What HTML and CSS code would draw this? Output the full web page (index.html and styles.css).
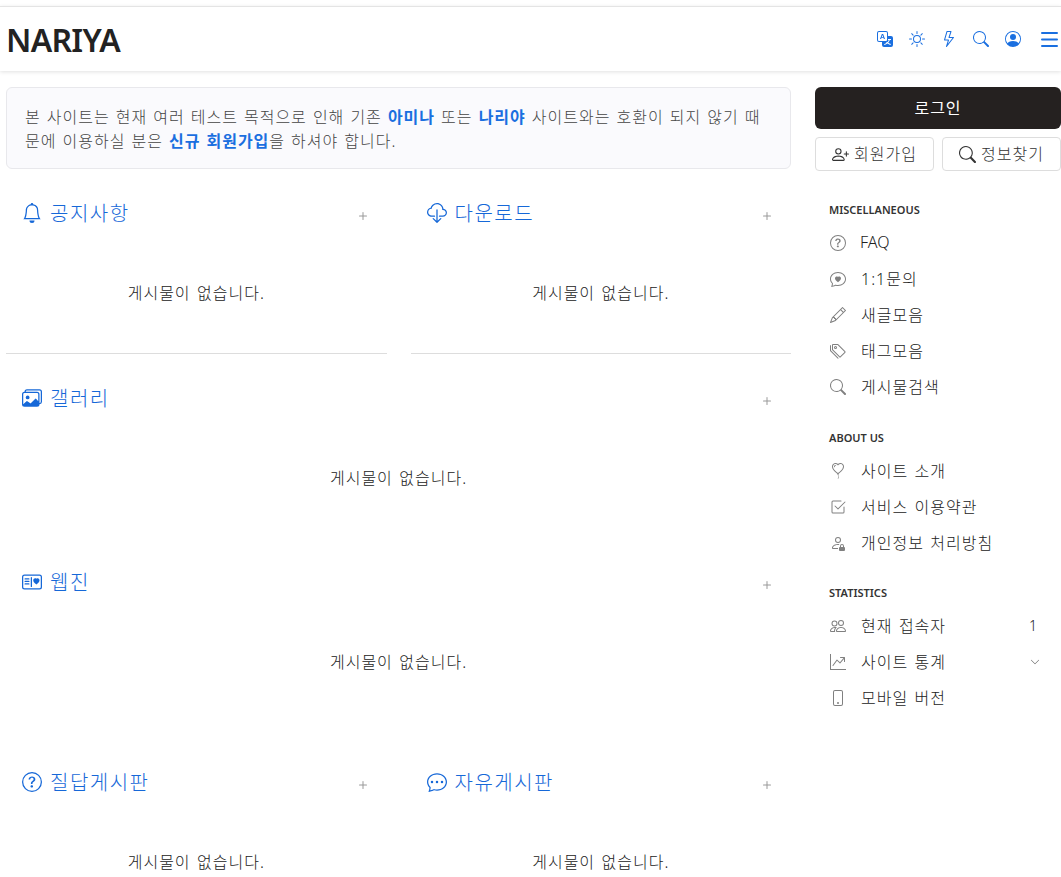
FILE: index.html
```html
<!DOCTYPE html>
<html lang="ko">
  <head>
    <meta charset="UTF-8" />
    <meta name="viewport" content="width=device-width, initial-scale=1" />
    <title>NARIYA</title>
    <link rel="stylesheet" href="styles.css">
  </head>
  <body>
    <!-- Icon sprite -->
    <svg class="sprite" xmlns="http://www.w3.org/2000/svg">
      <symbol id="i-translate" viewBox="0 0 16 16"><path d="M4.545 6.714 4.11 8H3l1.862-5h1.284L8 8H6.833l-.435-1.286H4.545zm1.634-.736L5.5 3.956h-.049l-.679 2.022H6.18z"/><path d="M0 2a2 2 0 0 1 2-2h7a2 2 0 0 1 2 2v3h3a2 2 0 0 1 2 2v7a2 2 0 0 1-2 2H7a2 2 0 0 1-2-2v-3H2a2 2 0 0 1-2-2V2zm2-1a1 1 0 0 0-1 1v7a1 1 0 0 0 1 1h7a1 1 0 0 0 1-1V2a1 1 0 0 0-1-1H2zm7.138 9.995c.193.301.402.583.63.846-.748.575-1.673 1.001-2.768 1.292.178.217.451.635.555.867 1.125-.359 2.08-.844 2.886-1.494.777.665 1.739 1.165 2.93 1.472.133-.254.414-.673.629-.89-1.125-.253-2.057-.694-2.82-1.284.681-.747 1.222-1.651 1.621-2.757H14V8h-3v1.047h.765c-.318.844-.74 1.546-1.272 2.13a6.066 6.066 0 0 1-.415-.492 1.988 1.988 0 0 1-.94.31z"/></symbol>
      <symbol id="i-sun" viewBox="0 0 16 16"><path d="M8 11a3 3 0 1 1 0-6 3 3 0 0 1 0 6zm0 1a4 4 0 1 0 0-8 4 4 0 0 0 0 8zM8 0a.5.5 0 0 1 .5.5v2a.5.5 0 0 1-1 0v-2A.5.5 0 0 1 8 0zm0 13a.5.5 0 0 1 .5.5v2a.5.5 0 0 1-1 0v-2A.5.5 0 0 1 8 13zm8-5a.5.5 0 0 1-.5.5h-2a.5.5 0 0 1 0-1h2a.5.5 0 0 1 .5.5zM3 8a.5.5 0 0 1-.5.5h-2a.5.5 0 0 1 0-1h2A.5.5 0 0 1 3 8zm10.657-5.657a.5.5 0 0 1 0 .707l-1.414 1.415a.5.5 0 1 1-.707-.708l1.414-1.414a.5.5 0 0 1 .707 0zm-9.193 9.193a.5.5 0 0 1 0 .707L3.05 13.657a.5.5 0 0 1-.707-.707l1.414-1.414a.5.5 0 0 1 .707 0zm9.193 2.121a.5.5 0 0 1-.707 0l-1.414-1.414a.5.5 0 0 1 .707-.707l1.414 1.414a.5.5 0 0 1 0 .707zM4.464 4.465a.5.5 0 0 1-.707 0L2.343 3.05a.5.5 0 1 1 .707-.707l1.414 1.414a.5.5 0 0 1 0 .708z"/></symbol>
      <symbol id="i-lightning" viewBox="0 0 16 16"><path d="M5.52.359A.5.5 0 0 1 6 0h4a.5.5 0 0 1 .474.658L8.694 6H12.5a.5.5 0 0 1 .395.807l-7 9a.5.5 0 0 1-.873-.454L6.823 9.5H3.5a.5.5 0 0 1-.48-.641l2.5-8.5zM6.374 1 4.168 8.5H7.5a.5.5 0 0 1 .478.647L6.78 13.04 11.478 7H8a.5.5 0 0 1-.474-.658L9.306 1H6.374z"/></symbol>
      <symbol id="i-search" viewBox="0 0 16 16"><path d="M11.742 10.344a6.5 6.5 0 1 0-1.397 1.398h-.001c.03.04.062.078.098.115l3.85 3.85a1 1 0 0 0 1.415-1.414l-3.85-3.85a1.007 1.007 0 0 0-.115-.1zM12 6.5a5.5 5.5 0 1 1-11 0 5.5 5.5 0 0 1 11 0z"/></symbol>
      <symbol id="i-person-circle" viewBox="0 0 16 16"><path d="M11 6a3 3 0 1 1-6 0 3 3 0 0 1 6 0z"/><path d="M0 8a8 8 0 1 1 16 0A8 8 0 0 1 0 8zm8-7a7 7 0 0 0-5.468 11.37C3.242 11.226 4.805 10 8 10s4.757 1.225 5.468 2.37A7 7 0 0 0 8 1z"/></symbol>
      <symbol id="i-bars" viewBox="0 0 17 15"><rect x="0" y="0" width="17" height="2" rx="1"/><rect x="0" y="6.5" width="17" height="2" rx="1"/><rect x="0" y="13" width="17" height="2" rx="1"/></symbol>
      <symbol id="i-person-plus" viewBox="0 0 16 16"><path d="M6 8a3 3 0 1 0 0-6 3 3 0 0 0 0 6zm2-3a2 2 0 1 1-4 0 2 2 0 0 1 4 0zm4 8c0 1-1 1-1 1H1s-1 0-1-1 1-4 6-4 6 3 6 4zm-1-.004c-.001-.246-.154-.986-.832-1.664C9.516 10.68 8.289 10 6 10c-2.29 0-3.516.68-4.168 1.332-.678.678-.83 1.418-.832 1.664h10z"/><path d="M13.5 5a.5.5 0 0 1 .5.5V7h1.5a.5.5 0 0 1 0 1H14v1.5a.5.5 0 0 1-1 0V8h-1.5a.5.5 0 0 1 0-1H13V5.5a.5.5 0 0 1 .5-.5z"/></symbol>
      <symbol id="i-plus" viewBox="0 0 16 16"><path d="M8 4a.5.5 0 0 1 .5.5v3h3a.5.5 0 0 1 0 1h-3v3a.5.5 0 0 1-1 0v-3h-3a.5.5 0 0 1 0-1h3v-3A.5.5 0 0 1 8 4z"/></symbol>
      <symbol id="i-bell" viewBox="0 0 16 16"><path d="M8 16a2 2 0 0 0 2-2H6a2 2 0 0 0 2 2zM8 1.918l-.797.161A4.002 4.002 0 0 0 4 6c0 .628-.134 2.197-.459 3.742-.16.767-.376 1.566-.663 2.258h10.244c-.287-.692-.502-1.49-.663-2.258C12.134 8.197 12 6.628 12 6a4.002 4.002 0 0 0-3.203-3.92L8 1.917zM14.22 12c.223.447.481.801.78 1H1c.299-.199.557-.553.78-1C2.68 10.2 3 6.88 3 6c0-2.42 1.72-4.44 4.005-4.901a1 1 0 1 1 1.99 0A5.002 5.002 0 0 1 13 6c0 .88.32 4.2 1.22 6z"/></symbol>
      <symbol id="i-cloud-down" viewBox="0 0 16 16"><path d="M4.406 1.342A5.53 5.53 0 0 1 8 0c2.69 0 4.923 2 5.166 4.579C14.758 4.804 16 6.137 16 7.773 16 9.569 14.502 11 12.687 11H10a.5.5 0 0 1 0-1h2.688C13.979 10 15 8.988 15 7.773c0-1.216-1.02-2.228-2.313-2.228h-.5v-.5C12.188 2.825 10.328 1 8 1a4.53 4.53 0 0 0-2.941 1.1c-.757.652-1.153 1.438-1.153 2.055v.448l-.445.049C2.064 4.805 1 5.952 1 7.318 1 8.785 2.23 10 3.781 10H6a.5.5 0 0 1 0 1H3.781C1.708 11 0 9.366 0 7.318c0-1.763 1.266-3.223 2.942-3.593.143-.863.698-1.723 1.464-2.383z"/><path d="M7.646 15.854a.5.5 0 0 0 .708 0l3-3a.5.5 0 0 0-.708-.708L8.5 14.293V5.5a.5.5 0 0 0-1 0v8.793l-2.146-2.147a.5.5 0 0 0-.708.708l3 3z"/></symbol>
      <symbol id="i-images" viewBox="0 0 16 16"><path d="M4.502 9a1.5 1.5 0 1 0 0-3 1.5 1.5 0 0 0 0 3z"/><path d="M1 13.5l2.8-2.6 2.9 1.9 4-3.9 2.5 2.5V14H1z"/><path d="M14.002 13a2 2 0 0 1-2 2h-10a2 2 0 0 1-2-2V5A2 2 0 0 1 2 3a2 2 0 0 1 2-2h10a2 2 0 0 1 2 2v8a2 2 0 0 1-1.998 2zM14 2H4a1 1 0 0 0-1 1h9.002a2 2 0 0 1 2 2v7A1 1 0 0 0 15 11V3a1 1 0 0 0-1-1zM2.002 4a1 1 0 0 0-1 1v8l2.646-2.354a.5.5 0 0 1 .63-.062l2.66 1.773 3.71-3.71a.5.5 0 0 1 .577-.094l1.777 1.947V5a1 1 0 0 0-1-1h-10z"/></symbol>
      <symbol id="i-postcard-heart" viewBox="0 0 16 16"><path d="M8 4.5a.5.5 0 0 0-1 0v7a.5.5 0 0 0 1 0v-7Zm3.5.878c1.482-1.42 4.795 1.392 0 4.622-4.795-3.23-1.482-6.043 0-4.622ZM2.5 5a.5.5 0 0 0 0 1h3a.5.5 0 0 0 0-1h-3Zm0 2a.5.5 0 0 0 0 1h3a.5.5 0 0 0 0-1h-3Zm0 2a.5.5 0 0 0 0 1h3a.5.5 0 0 0 0-1h-3Z"/><path d="M0 4a2 2 0 0 1 2-2h12a2 2 0 0 1 2 2v8a2 2 0 0 1-2 2H2a2 2 0 0 1-2-2V4Zm2-1a1 1 0 0 0-1 1v8a1 1 0 0 0 1 1h12a1 1 0 0 0 1-1V4a1 1 0 0 0-1-1H2Z"/></symbol>
      <symbol id="i-question" viewBox="0 0 16 16"><path d="M8 15A7 7 0 1 1 8 1a7 7 0 0 1 0 14zm0 1A8 8 0 1 0 8 0a8 8 0 0 0 0 16z"/><path d="M5.255 5.786a.237.237 0 0 0 .241.247h.825c.138 0 .248-.113.266-.25.09-.656.54-1.134 1.342-1.134.686 0 1.314.343 1.314 1.168 0 .635-.374.927-.965 1.371-.673.489-1.206 1.06-1.168 1.987l.003.217a.25.25 0 0 0 .25.246h.811a.25.25 0 0 0 .25-.25v-.105c0-.718.273-.927 1.01-1.486.609-.463 1.244-.977 1.244-2.056 0-1.511-1.276-2.241-2.673-2.241-1.267 0-2.655.59-2.75 2.286zm1.557 5.763c0 .533.425.927 1.01.927.609 0 1.028-.394 1.028-.927 0-.552-.42-.94-1.029-.94-.584 0-1.009.388-1.009.94z"/></symbol>
      <symbol id="i-chat-dots" viewBox="0 0 16 16"><path d="M5 8a1 1 0 1 1-2 0 1 1 0 0 1 2 0zm4 0a1 1 0 1 1-2 0 1 1 0 0 1 2 0zm3 1a1 1 0 1 0 0-2 1 1 0 0 0 0 2z"/><path d="m2.165 15.803.02-.004c1.83-.363 2.948-.842 3.468-1.105A9.06 9.06 0 0 0 8 15c4.418 0 8-3.134 8-7s-3.582-7-8-7-8 3.134-8 7c0 1.76.743 3.37 1.97 4.6a10.437 10.437 0 0 1-.524 2.318l-.003.011a10.722 10.722 0 0 1-.244.637c-.079.186.074.394.273.362a21.673 21.673 0 0 0 .693-.125zm.8-3.108a1 1 0 0 0-.287-.801C1.618 10.83 1 9.468 1 8c0-3.192 3.004-6 7-6s7 2.808 7 6c0 3.193-3.004 6-7 6a8.06 8.06 0 0 1-2.088-.272 1 1 0 0 0-.711.074c-.387.196-1.24.57-2.634.893a10.97 10.97 0 0 0 .398-2z"/></symbol>
      <symbol id="i-chat-heart" viewBox="0 0 16 16"><path d="M2.965 12.695a1 1 0 0 0-.287-.801C1.618 10.83 1 9.468 1 8c0-3.192 3.004-6 7-6s7 2.808 7 6c0 3.193-3.004 6-7 6a8.06 8.06 0 0 1-2.088-.272 1 1 0 0 0-.711.074c-.387.196-1.24.57-2.634.893a10.97 10.97 0 0 0 .398-2Zm-.8 3.108.02-.004c1.83-.363 2.948-.842 3.468-1.105A9.06 9.06 0 0 0 8 15c4.418 0 8-3.134 8-7s-3.582-7-8-7-8 3.134-8 7c0 1.76.743 3.37 1.97 4.6a10.437 10.437 0 0 1-.524 2.318l-.003.011a10.722 10.722 0 0 1-.244.637c-.079.186.074.394.273.362a21.673 21.673 0 0 0 .693-.125ZM8 5.993c1.664-1.711 5.825 1.283 0 5.132-5.825-3.85-1.664-6.843 0-5.132Z"/></symbol>
      <symbol id="i-pencil" viewBox="0 0 16 16"><path d="M12.146.146a.5.5 0 0 1 .708 0l3 3a.5.5 0 0 1 0 .708l-10 10a.5.5 0 0 1-.168.11l-5 2a.5.5 0 0 1-.65-.65l2-5a.5.5 0 0 1 .11-.168l10-10zM11.207 2.5 13.5 4.793 14.793 3.5 12.5 1.207 11.207 2.5zm1.586 3L10.5 3.207 4 9.707V10h.5a.5.5 0 0 1 .5.5v.5h.5a.5.5 0 0 1 .5.5v.5h.293l6.5-6.5zm-9.761 5.175-.106.106-1.528 3.821 3.821-1.528.106-.106A.5.5 0 0 1 5 12.5V12h-.5a.5.5 0 0 1-.5-.5V11h-.5a.5.5 0 0 1-.468-.325z"/></symbol>
      <symbol id="i-tags" viewBox="0 0 16 16"><path d="M3 2v4.586l7 7L14.586 9l-7-7H3zM2 2a1 1 0 0 1 1-1h4.586a1 1 0 0 1 .707.293l7 7a1 1 0 0 1 0 1.414l-4.586 4.586a1 1 0 0 1-1.414 0l-7-7A1 1 0 0 1 2 6.586V2z"/><path d="M5.5 5a.5.5 0 1 1 0-1 .5.5 0 0 1 0 1zm0 1a1.5 1.5 0 1 0 0-3 1.5 1.5 0 0 0 0 3zM1 7.086a1 1 0 0 0 .293.707L8.75 15.25l-.043.043a1 1 0 0 1-1.414 0l-7-7A1 1 0 0 1 0 7.586V3a1 1 0 0 1 1-1v5.086z"/></symbol>
      <symbol id="i-balloon-heart" viewBox="0 0 16 16"><path d="m8 2.42-.717-.737c-1.13-1.161-3.243-.777-4.01.72-.35.685-.451 1.707.236 3.062C4.16 6.753 5.52 8.32 8 10.042c2.479-1.723 3.839-3.29 4.491-4.577.687-1.355.587-2.377.236-3.061-.767-1.498-2.88-1.882-4.01-.721L8 2.42Zm-.49 8.5c-10.78-7.44-3-13.155.359-10.063.045.041.089.084.132.129.043-.045.087-.088.132-.129 3.36-3.092 11.137 2.624.357 10.063l.235.468a.25.25 0 1 1-.448.224l-.008-.017c.008.11.02.202.037.29.054.27.161.488.419 1.003.288.578.235 1.15.076 1.629-.157.469-.422.867-.588 1.115l-.004.007a.25.25 0 1 1-.416-.278c.168-.252.4-.6.533-1.003.133-.396.163-.824-.049-1.246l-.013-.028c-.24-.48-.38-.758-.448-1.102a3.177 3.177 0 0 1-.052-.45l-.04.08a.25.25 0 1 1-.447-.224l.235-.468ZM6.013 2.06c-.649-.18-1.483.083-1.85.798-.131.258-.245.689-.08 1.335.063.244.414.198.487-.043.21-.697.627-1.447 1.359-1.692.217-.073.304-.337.084-.398Z"/></symbol>
      <symbol id="i-check-square" viewBox="0 0 16 16"><path d="M3 14.5A1.5 1.5 0 0 1 1.5 13V3A1.5 1.5 0 0 1 3 1.5h8a.5.5 0 0 1 0 1H3a.5.5 0 0 0-.5.5v10a.5.5 0 0 0 .5.5h10a.5.5 0 0 0 .5-.5V8a.5.5 0 0 1 1 0v5a1.5 1.5 0 0 1-1.5 1.5H3z"/><path d="m8.354 10.354 7-7a.5.5 0 0 0-.708-.708L8 9.293 5.354 6.646a.5.5 0 1 0-.708.708l3 3a.5.5 0 0 0 .708 0z"/></symbol>
      <symbol id="i-person-lock" viewBox="0 0 16 16"><path d="M11 5a3 3 0 1 1-6 0 3 3 0 0 1 6 0ZM8 7a2 2 0 1 0 0-4 2 2 0 0 0 0 4Zm0 5.996V14H3s-1 0-1-1 1-4 6-4c.564 0 1.077.038 1.544.107a4.524 4.524 0 0 0-.803.918A10.46 10.46 0 0 0 8 10c-2.29 0-3.516.68-4.168 1.332-.678.678-.83 1.418-.832 1.664h5ZM9 13a1 1 0 0 1 1-1v-1a2 2 0 1 1 4 0v1a1 1 0 0 1 1 1v2a1 1 0 0 1-1 1h-4a1 1 0 0 1-1-1v-2Zm3-3a1 1 0 0 0-1 1v1h2v-1a1 1 0 0 0-1-1Z"/></symbol>
      <symbol id="i-people" viewBox="0 0 16 16"><path d="M15 14s1 0 1-1-1-4-5-4-5 3-5 4 1 1 1 1h8Zm-7.978-1A.261.261 0 0 1 7 12.996c.001-.264.167-1.03.76-1.72C8.312 10.629 9.282 10 11 10c1.717 0 2.687.63 3.24 1.276.593.69.758 1.457.76 1.72l-.008.002a.274.274 0 0 1-.014.002H7.022ZM11 7a2 2 0 1 0 0-4 2 2 0 0 0 0 4Zm3-2a3 3 0 1 1-6 0 3 3 0 0 1 6 0ZM6.936 9.28a5.88 5.88 0 0 0-1.23-.247A7.35 7.35 0 0 0 5 9c-4 0-5 3-5 4 0 .667.333 1 1 1h4.216A2.238 2.238 0 0 1 5 13c0-1.01.377-2.042 1.09-2.904.243-.294.526-.569.846-.816ZM4.92 10A5.493 5.493 0 0 0 4 13H1c0-.26.164-1.03.76-1.724.545-.636 1.492-1.256 3.16-1.275ZM1.5 5.5a3 3 0 1 1 6 0 3 3 0 0 1-6 0Zm3-2a2 2 0 1 0 0 4 2 2 0 0 0 0-4Z"/></symbol>
      <symbol id="i-graph" viewBox="0 0 16 16"><path d="M0 0h1v15h15v1H0V0Zm10 3.5a.5.5 0 0 1 .5-.5h4a.5.5 0 0 1 .5.5v4a.5.5 0 0 1-1 0V4.9l-3.613 4.417a.5.5 0 0 1-.74.037L7.06 6.767l-3.656 5.027a.5.5 0 0 1-.808-.588l4-5.5a.5.5 0 0 1 .758-.06l2.609 2.61L13.445 4H10.5a.5.5 0 0 1-.5-.5Z"/></symbol>
      <symbol id="i-phone" viewBox="0 0 16 16"><path d="M11 1a1 1 0 0 1 1 1v12a1 1 0 0 1-1 1H5a1 1 0 0 1-1-1V2a1 1 0 0 1 1-1h6zM5 0a2 2 0 0 0-2 2v12a2 2 0 0 0 2 2h6a2 2 0 0 0 2-2V2a2 2 0 0 0-2-2H5z"/><path d="M8 14a1 1 0 1 0 0-2 1 1 0 0 0 0 2z"/></symbol>
      <symbol id="i-chevron" viewBox="0 0 16 16"><path d="M1.646 4.646a.5.5 0 0 1 .708 0L8 10.293l5.646-5.647a.5.5 0 0 1 .708.708l-6 6a.5.5 0 0 1-.708 0l-6-6a.5.5 0 0 1 0-.708z"/></symbol>
    </svg>

    <header id="top-bar">
      <a class="logo" href="#">NARIYA</a>
      <nav class="top-icons">
        <svg class="icon"><use href="#i-translate"/></svg>
        <svg class="icon"><use href="#i-sun"/></svg>
        <svg class="icon"><use href="#i-lightning"/></svg>
        <svg class="icon"><use href="#i-search"/></svg>
        <svg class="icon"><use href="#i-person-circle"/></svg>
        <svg class="icon icon-bars"><use href="#i-bars"/></svg>
      </nav>
    </header>

    <div id="wrapper">
      <main id="content">
        <div class="notice">
          본 사이트는 현재 여러 테스트 목적으로 인해 기존 <b>아미나</b> 또는 <b>나리야</b> 사이트와는 호환이 되지 않기 때문에 이용하실 분은 <b>신규 회원가입</b>을 하셔야 합니다.
        </div>

        <div class="board-grid">
          <section class="board lined">
            <div class="board-head">
              <h3><svg class="icon"><use href="#i-bell"/></svg>공지사항</h3>
              <svg class="more"><use href="#i-plus"/></svg>
            </div>
            <p class="empty">게시물이 없습니다.</p>
          </section>
          <section class="board lined">
            <div class="board-head">
              <h3><svg class="icon"><use href="#i-cloud-down"/></svg>다운로드</h3>
              <svg class="more"><use href="#i-plus"/></svg>
            </div>
            <p class="empty">게시물이 없습니다.</p>
          </section>
          <section class="board wide">
            <div class="board-head">
              <h3><svg class="icon"><use href="#i-images"/></svg>갤러리</h3>
              <svg class="more"><use href="#i-plus"/></svg>
            </div>
            <p class="empty">게시물이 없습니다.</p>
          </section>
          <section class="board wide spaced">
            <div class="board-head">
              <h3><svg class="icon"><use href="#i-postcard-heart"/></svg>웹진</h3>
              <svg class="more"><use href="#i-plus"/></svg>
            </div>
            <p class="empty">게시물이 없습니다.</p>
          </section>
          <section class="board">
            <div class="board-head">
              <h3><svg class="icon"><use href="#i-question"/></svg>질답게시판</h3>
              <svg class="more"><use href="#i-plus"/></svg>
            </div>
            <p class="empty">게시물이 없습니다.</p>
          </section>
          <section class="board">
            <div class="board-head">
              <h3><svg class="icon"><use href="#i-chat-dots"/></svg>자유게시판</h3>
              <svg class="more"><use href="#i-plus"/></svg>
            </div>
            <p class="empty">게시물이 없습니다.</p>
          </section>
        </div>
      </main>

      <aside id="sidebar">
        <button class="btn-login">로그인</button>
        <div class="btn-row">
          <button class="btn-line"><svg class="icon"><use href="#i-person-plus"/></svg>회원가입</button>
          <button class="btn-line"><svg class="icon"><use href="#i-search"/></svg>정보찾기</button>
        </div>

        <h6>MISCELLANEOUS</h6>
        <ul class="side-menu">
          <li><svg class="icon"><use href="#i-question"/></svg><span class="latin">FAQ</span></li>
          <li><svg class="icon"><use href="#i-chat-heart"/></svg>1:1문의</li>
          <li><svg class="icon"><use href="#i-pencil"/></svg>새글모음</li>
          <li><svg class="icon"><use href="#i-tags"/></svg>태그모음</li>
          <li><svg class="icon"><use href="#i-search"/></svg>게시물검색</li>
        </ul>

        <h6>ABOUT US</h6>
        <ul class="side-menu">
          <li><svg class="icon"><use href="#i-balloon-heart"/></svg>사이트 소개</li>
          <li><svg class="icon"><use href="#i-check-square"/></svg>서비스 이용약관</li>
          <li><svg class="icon"><use href="#i-person-lock"/></svg>개인정보 처리방침</li>
        </ul>

        <h6 class="short">STATISTICS</h6>
        <ul class="side-menu">
          <li><svg class="icon"><use href="#i-people"/></svg>현재 접속자<span class="count">1</span></li>
          <li><svg class="icon"><use href="#i-graph"/></svg>사이트 통계<svg class="chevron"><use href="#i-chevron"/></svg></li>
          <li><svg class="icon"><use href="#i-phone"/></svg>모바일 버전</li>
        </ul>
      </aside>
    </div>
  </body>
</html>
```

FILE: styles.css
```css
* {
  box-sizing: border-box;
}

body {
  margin: 0;
  padding: 6px 0 0;
  font-family: "Noto Sans", "Noto Sans CJK KR", sans-serif;
  font-size: 16px;
  font-weight: 300;
  letter-spacing: 1px;
  word-spacing: 1.3px;
  color: #222;
  background-color: #fff;
}

.sprite {
  display: none;
}

.icon {
  width: 16px;
  height: 16px;
  fill: currentColor;
  flex-shrink: 0;
}

/* Top bar */
#top-bar {
  display: flex;
  align-items: center;
  justify-content: space-between;
  height: 65px;
  padding: 0 3px 0 6px;
  border-top: 1px solid #e4e4e4;
  box-shadow: 0 1px 4px rgba(0, 0, 0, 0.12);
}

.logo {
  font-size: 32px;
  font-weight: 600;
  letter-spacing: -0.7px;
  color: #222;
  text-decoration: none;
}

.top-icons {
  display: flex;
  align-items: center;
  gap: 16px;
  color: #1a6fe0;
}

.top-icons .icon-bars {
  width: 17px;
  height: 15px;
  margin-left: 4px;
}

/* Page layout */
#wrapper {
  display: flex;
  gap: 24px;
  padding: 16px 0 0 6px;
}

#content {
  width: 785px;
}

#sidebar {
  width: 246px;
}

/* Notice */
.notice {
  height: 82px;
  margin-bottom: 24px;
  padding: 17px 18px;
  line-height: 24px;
  word-spacing: 0.9px;
  word-break: break-all;
  color: #444;
  background-color: #fafafd;
  border: 1px solid #e8e8ec;
  border-radius: 6px;
}

.notice b {
  font-weight: 700;
  color: #1a6fe0;
}

/* Boards */
.board-grid {
  display: grid;
  grid-template-columns: 1fr 1fr;
  column-gap: 24px;
}

.board {
  margin-bottom: 24px;
}

.board.wide {
  grid-column: 1 / 3;
}

.board.spaced {
  margin-bottom: 40px;
}

.board.lined {
  border-bottom: 1px solid #ddd;
}

.board-head {
  display: flex;
  align-items: center;
  justify-content: space-between;
  height: 40px;
  padding: 0 16px;
}

.board-head h3 {
  display: flex;
  align-items: center;
  gap: 8px;
  margin: 0;
  padding-bottom: 2px;
  font-size: 20px;
  font-weight: 300;
  letter-spacing: 1.5px;
  color: #1668d8;
}

.board-head h3 .icon {
  width: 20px;
  height: 20px;
  margin-top: 2px;
}

.more {
  width: 16px;
  height: 16px;
  margin-top: 5px;
  fill: #999;
}

.empty {
  display: flex;
  align-items: center;
  justify-content: center;
  height: 120px;
  margin: 0;
  padding-bottom: 2px;
}

/* Sidebar */
#sidebar button {
  font-family: inherit;
  font-size: 16px;
  font-weight: 300;
  letter-spacing: 1px;
  padding: 0 0 2px;
  cursor: pointer;
}

#sidebar .btn-login {
  display: block;
  width: 100%;
  height: 42px;
  font-weight: 400;
  color: #fff;
  background-color: #252120;
  border: 0;
  border-radius: 6px;
}

.btn-row {
  display: flex;
  gap: 8px;
  margin: 8px 0 24px;
}

.btn-line {
  display: flex;
  align-items: center;
  justify-content: center;
  gap: 5px;
  flex: 1;
  height: 34px;
  color: #333;
  background-color: #fff;
  border: 1px solid #ddd;
  border-radius: 4px;
}

.btn-line .icon {
  width: 17px;
  height: 17px;
  margin-top: 2px;
}

#sidebar h6 {
  display: flex;
  align-items: center;
  height: 30px;
  margin: 18px 0 0;
  padding: 0 0 2px 14px;
  font-size: 11px;
  font-weight: 600;
  letter-spacing: 0;
  word-spacing: 0;
  color: #333;
}

#sidebar .btn-row + h6 {
  margin-top: 0;
}

#sidebar h6.short {
  height: 29px;
}

.side-menu {
  margin: 0;
  padding: 0;
  list-style: none;
}

.side-menu li {
  display: flex;
  align-items: center;
  gap: 15px;
  height: 36px;
  padding: 0 21px 2px 15px;
}

.side-menu .icon {
  margin-top: 2px;
  color: #808080;
}

.latin {
  margin-left: -1px;
  font-size: 16px;
  letter-spacing: 0;
}

.count,
.chevron {
  margin-left: auto;
}

.count {
  font-size: 14px;
  letter-spacing: 0;
  margin-right: 3px;
}

.chevron {
  width: 10px;
  height: 10px;
  margin-top: 2px;
  fill: #555;
}
```
